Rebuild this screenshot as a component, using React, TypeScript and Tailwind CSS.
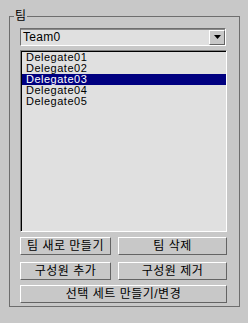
import React from "react";

// Panneau "팀" : liste déroulante, liste des membres, boutons d'action
const members = ["Delegate01", "Delegate02", "Delegate03", "Delegate04", "Delegate05"];
const selected = 2;

const font = { fontFamily: '"Liberation Sans", "Noto Sans CJK KR", sans-serif' };

function Btn({ label, className = "" }: { label: string; className?: string }) {
  return (
    <div
      className={`h-[18px] flex items-center justify-center bg-[#c8c8c8] border border-t-white border-l-white border-b-[#646464] border-r-[#646464] text-[12px] leading-[14px] tracking-[0.5px] text-black ${className}`}
    >
      {label}
    </div>
  );
}

export default function App() {
  return (
    <div className="w-[248px] h-[323px] bg-[#c8c8c8] pt-[16px] pl-[9px]" style={font}>
      {/* Group box */}
      <div className="relative w-[231px] h-[291px] border border-[#6e6e6e] pt-[11px] pl-[10px] pr-[11px]">
        <span className="absolute left-[4px] top-[-9px] px-[1px] bg-[#c8c8c8] text-[12px] leading-[16px] text-black">
          팀
        </span>

        {/* Combo box */}
        <div className="h-[18px] w-[206px] flex items-center bg-[#e0e0e0] border border-t-[#6e6e6e] border-l-[#6e6e6e] border-b-white border-r-white shadow-[inset_0_1px_0_#8a8a8a]">
          <span className="flex-1 pl-[2px] text-[12px] leading-[14px] tracking-[0.3px] text-black">Team0</span>
          <div className="w-[16px] h-[15px] flex items-center justify-center bg-[#c8c8c8] border border-t-white border-l-white border-b-[#646464] border-r-[#646464]">
            <svg width="7" height="4" viewBox="0 0 7 4">
              <path d="M0 0h7L3.5 4z" fill="#000" />
            </svg>
          </div>
        </div>

        {/* List box */}
        <div className="mt-[4px] h-[182px] w-[207px] bg-[#e0e0e0] border border-t-[#808080] border-l-[#808080] border-b-white border-r-white shadow-[inset_1px_1px_0_#000] pt-[1px] pl-[1px]">
          {members.map((m, i) => (
            <div
              key={m}
              className={`h-[11px] flex items-center pl-[4px] text-[11px] leading-[11px] tracking-[0.5px] ${
                i === selected ? "bg-[#000080] text-white" : "text-black"
              }`}
            >
              {m}
            </div>
          ))}
        </div>

        {/* Buttons */}
        <div className="mt-[5px] flex gap-[7px] w-[207px]">
          <Btn label="팀 새로 만들기" className="w-[91px]" />
          <Btn label="팀 삭제" className="flex-1" />
        </div>
        <div className="mt-[7px] flex gap-[7px] w-[207px]">
          <Btn label="구성원 추가" className="w-[91px]" />
          <Btn label="구성원 제거" className="flex-1" />
        </div>
        <div className="mt-[5px] w-[207px]">
          <Btn label="선택 세트 만들기/변경" />
        </div>
      </div>
    </div>
  );
}
